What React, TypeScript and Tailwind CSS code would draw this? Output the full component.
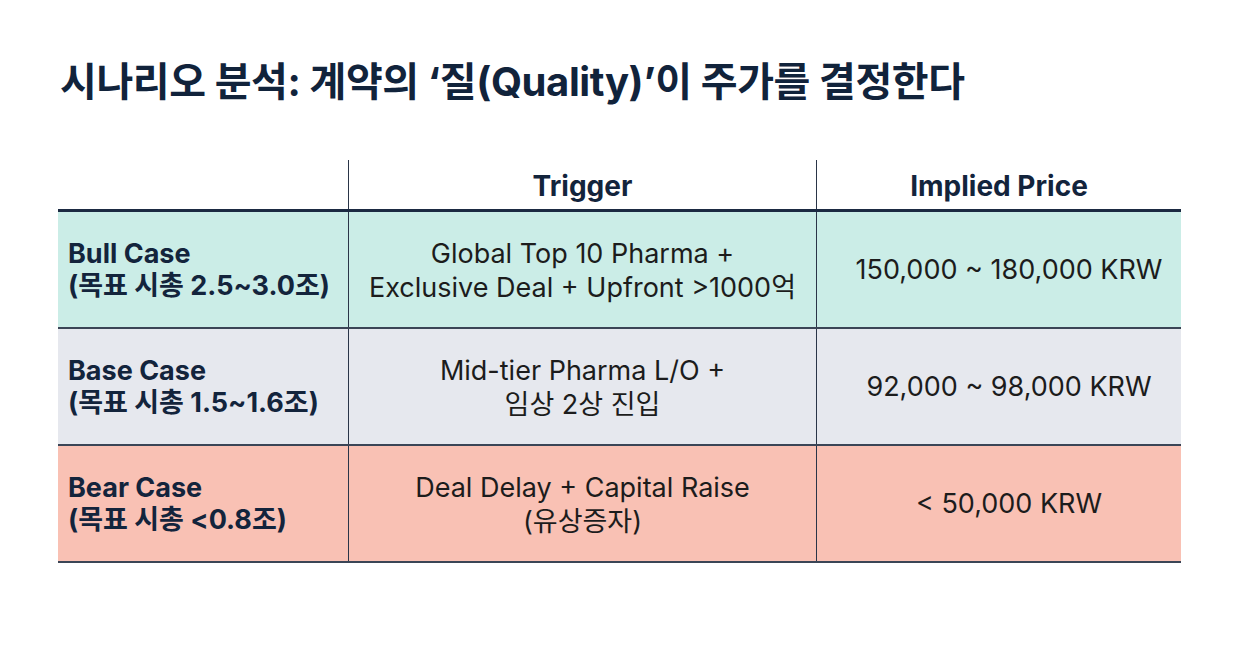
import React from 'react';

const rows = [
  {
    name: 'Bull Case',
    target: '(목표 시총 2.5~3.0조)',
    trigger: ['Global Top 10 Pharma +', 'Exclusive Deal + Upfront >1000억'],
    price: '150,000 ~ 180,000 KRW',
    bg: 'bg-[#cbede7]',
  },
  {
    name: 'Base Case',
    target: '(목표 시총 1.5~1.6조)',
    trigger: ['Mid-tier Pharma L/O +', '임상 2상 진입'],
    price: '92,000 ~ 98,000 KRW',
    bg: 'bg-[#e6e8ee]',
  },
  {
    name: 'Bear Case',
    target: '(목표 시총 <0.8조)',
    trigger: ['Deal Delay + Capital Raise', '(유상증자)'],
    price: '< 50,000 KRW',
    bg: 'bg-[#f9c1b4]',
  },
];

const font = { fontFamily: 'Inter, "Noto Sans CJK KR", sans-serif' };

export default function App() {
  return (
    <div className="w-[1238px] h-[648px] bg-white overflow-hidden" style={font}>
      {/* Title */}
      <h1 className="pl-[60px] pt-[60px] text-[40px] leading-[44px] font-bold tracking-[-0.4px] text-[#11233b]">
        시나리오 분석: 계약의 ‘질(Quality)’이 주가를 결정한다
      </h1>

      {/* Table */}
      <div className="ml-[58px] mt-[56px] w-[1123px]">
        <div className="grid grid-cols-[291px_468px_364px] h-[52px] border-b-[3px] border-[#1b2a42]">
          <div className="border-r-[1.5px] border-[#2a3548]" />
          <div className="border-r-[1.5px] border-[#2a3548] flex items-center justify-center text-[28px] font-bold text-[#13243c] pt-[2px]">
            Trigger
          </div>
          <div className="flex items-center justify-center text-[28px] font-bold text-[#13243c] pt-[2px]">
            Implied Price
          </div>
        </div>
        {rows.map((r) => (
          <div
            key={r.name}
            className={`grid grid-cols-[291px_468px_364px] h-[117px] border-b-2 border-[#3b4556] ${r.bg}`}
          >
            <div className="border-r-[1.5px] border-[#2a3548] flex flex-col justify-center pl-[10px] text-[27px] leading-[32px] font-bold text-[#13243c] pt-[1px]">
              <div>{r.name}</div>
              <div>{r.target}</div>
            </div>
            <div className="border-r-[1.5px] border-[#2a3548] flex flex-col justify-center items-center text-[27px] leading-[34px] text-[#1c1c1c] pt-[3px]">
              {r.trigger.map((t) => (
                <div key={t}>{t}</div>
              ))}
            </div>
            <div className="flex items-center justify-center pl-[20px] text-[27px] text-[#1c1c1c] pt-[1px]">
              {r.price}
            </div>
          </div>
        ))}
      </div>
    </div>
  );
}
